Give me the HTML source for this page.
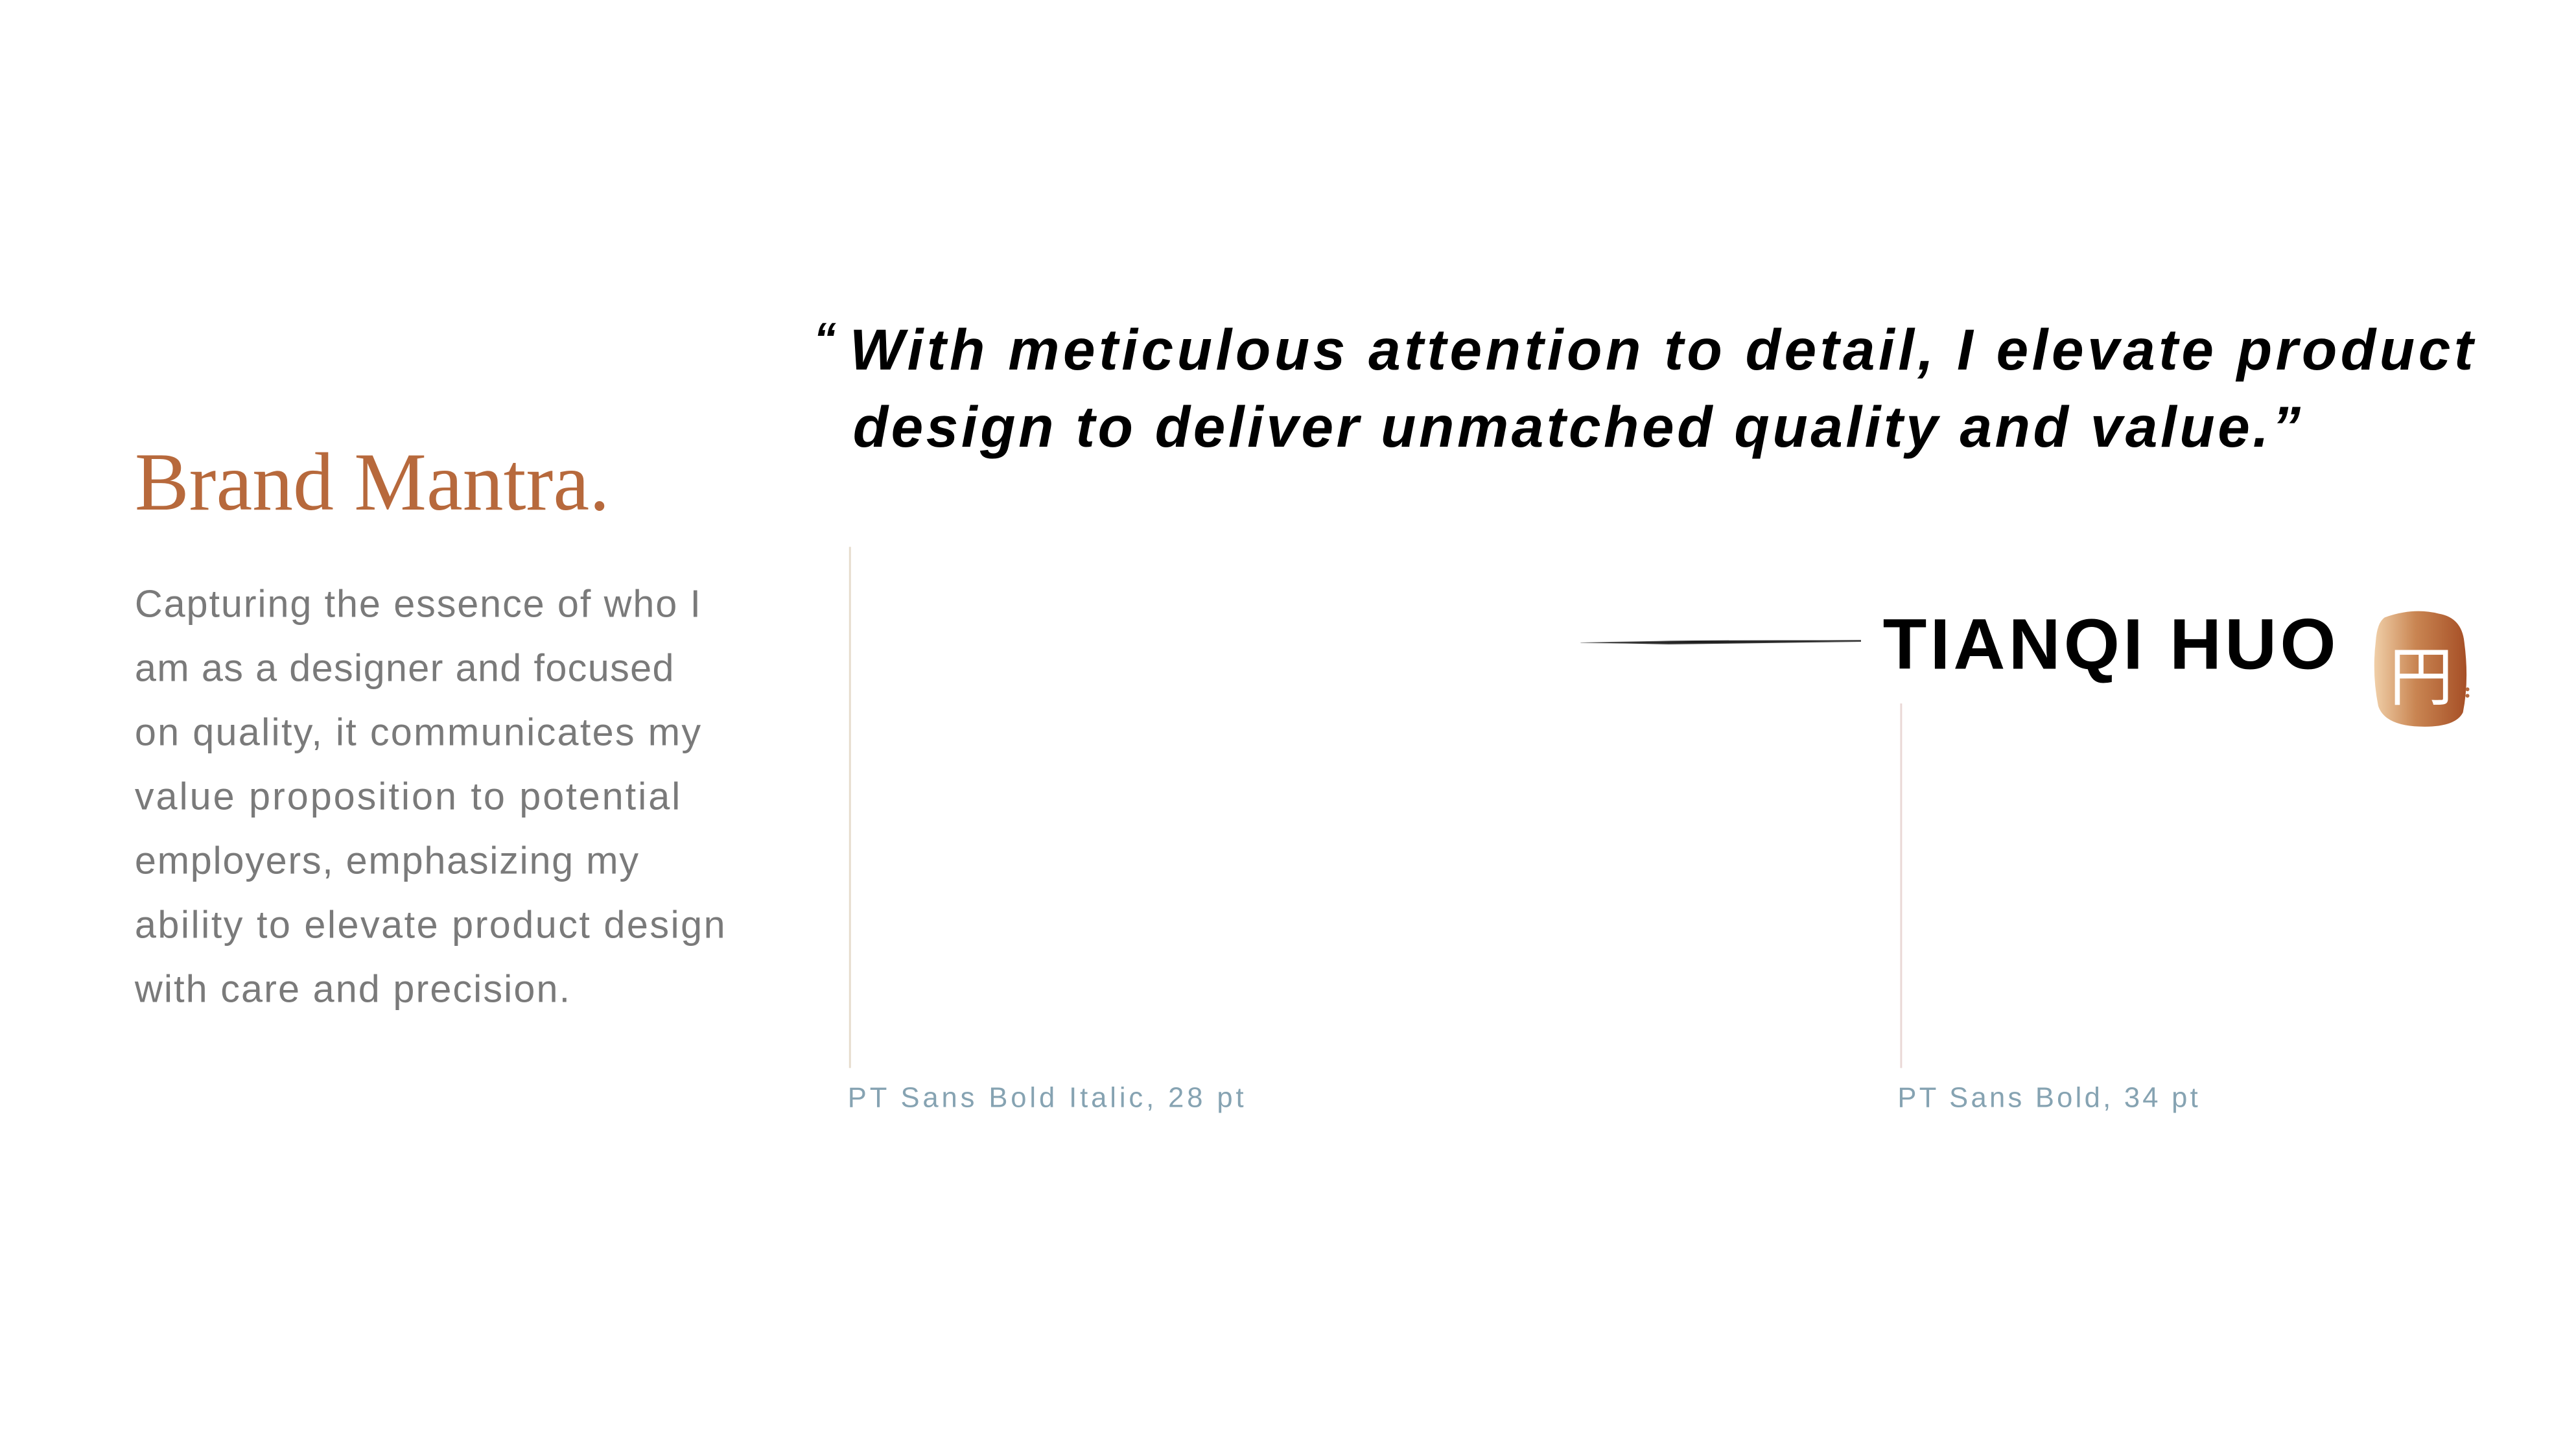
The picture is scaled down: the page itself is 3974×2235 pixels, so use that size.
<!DOCTYPE html>
<html><head><meta charset="utf-8"><style>
html,body{margin:0;padding:0;background:#fff;width:3974px;height:2235px;overflow:hidden}
svg{display:block}
</style></head><body>
<svg width="3974" height="2235" viewBox="0 0 3974 2235" xmlns="http://www.w3.org/2000/svg">
<defs>
<linearGradient id="seal" x1="0" x2="1" y1="0" y2="0">
<stop offset="0" stop-color="#f0cfa8"/><stop offset="0.45" stop-color="#c98552"/><stop offset="1" stop-color="#a64f26"/>
</linearGradient>
<linearGradient id="brush" x1="0" x2="1">
<stop offset="0" stop-color="#000" stop-opacity="0.3"/><stop offset="0.4" stop-color="#000" stop-opacity="0.9"/><stop offset="1" stop-color="#000" stop-opacity="0.6"/>
</linearGradient>
</defs>
<g transform="scale(0.99)">
<text x="210" y="794" font-family="Liberation Serif, serif" font-size="128" fill="#b7693c" textLength="740" lengthAdjust="spacingAndGlyphs">Brand Mantra.</text>
<g font-family="Liberation Sans, sans-serif" font-size="60" fill="#7a7a7a" lengthAdjust="spacingAndGlyphs">
<text x="210" y="961" textLength="882">Capturing the essence of who I</text>
<text x="210" y="1061" textLength="840">am as a designer and focused</text>
<text x="210" y="1161" textLength="882">on quality, it communicates my</text>
<text x="210" y="1261" textLength="850">value proposition to potential</text>
<text x="210" y="1361" textLength="785">employers, emphasizing my</text>
<text x="210" y="1461" textLength="920">ability to elevate product design</text>
<text x="210" y="1561" textLength="678">with care and precision.</text>
</g>
<g font-family="Liberation Sans, sans-serif" font-weight="bold" font-style="italic" fill="#000">
<text x="1268" y="552" font-size="70">“</text>
<text x="1324" y="576" font-size="90" textLength="2530" lengthAdjust="spacing">With meticulous attention to detail, I elevate product</text>
<text x="1329" y="696" font-size="90" textLength="2256" lengthAdjust="spacing">design to deliver unmatched quality and value.”</text>
</g>
<rect x="1323" y="852" width="3" height="812" fill="#e6dccd"/>
<rect x="2961" y="1096" width="3" height="568" fill="#ead8d6"/>
<g font-family="Liberation Sans, sans-serif" font-size="44" fill="#86a3b2" lengthAdjust="spacingAndGlyphs">
<text x="1321" y="1725" textLength="617">PT Sans Bold Italic, 28 pt</text>
<text x="2957" y="1725" textLength="468">PT Sans Bold, 34 pt</text>
</g>
<path d="M2463 1001 Q2680 996 2900 998 Q2680 1004 2463 1002 Z" fill="url(#brush)"/>
<path d="M2463 1001 L2900 997 L2900 1000 L2600 1004 Z" fill="#222" opacity="0.8"/>
<text x="2934" y="1042" font-family="Liberation Sans, sans-serif" font-weight="bold" font-size="112" fill="#000" textLength="706" lengthAdjust="spacing">TIANQI HUO</text>
<path d="M3716 962 Q3760 946 3800 956 Q3836 962 3840 1000 Q3848 1060 3838 1110 Q3826 1134 3770 1132 Q3716 1130 3706 1100 Q3696 1050 3702 1000 Q3704 970 3716 962 Z" fill="url(#seal)"/>
<text x="3773" y="1090" text-anchor="middle" font-family="Noto Sans CJK JP, sans-serif" font-size="100" fill="#fff">円</text>
<circle cx="3845" cy="1074" r="3" fill="#b56a3e"/><circle cx="3845" cy="1084" r="3" fill="#b56a3e"/>
</g>
</svg>
</body></html>
